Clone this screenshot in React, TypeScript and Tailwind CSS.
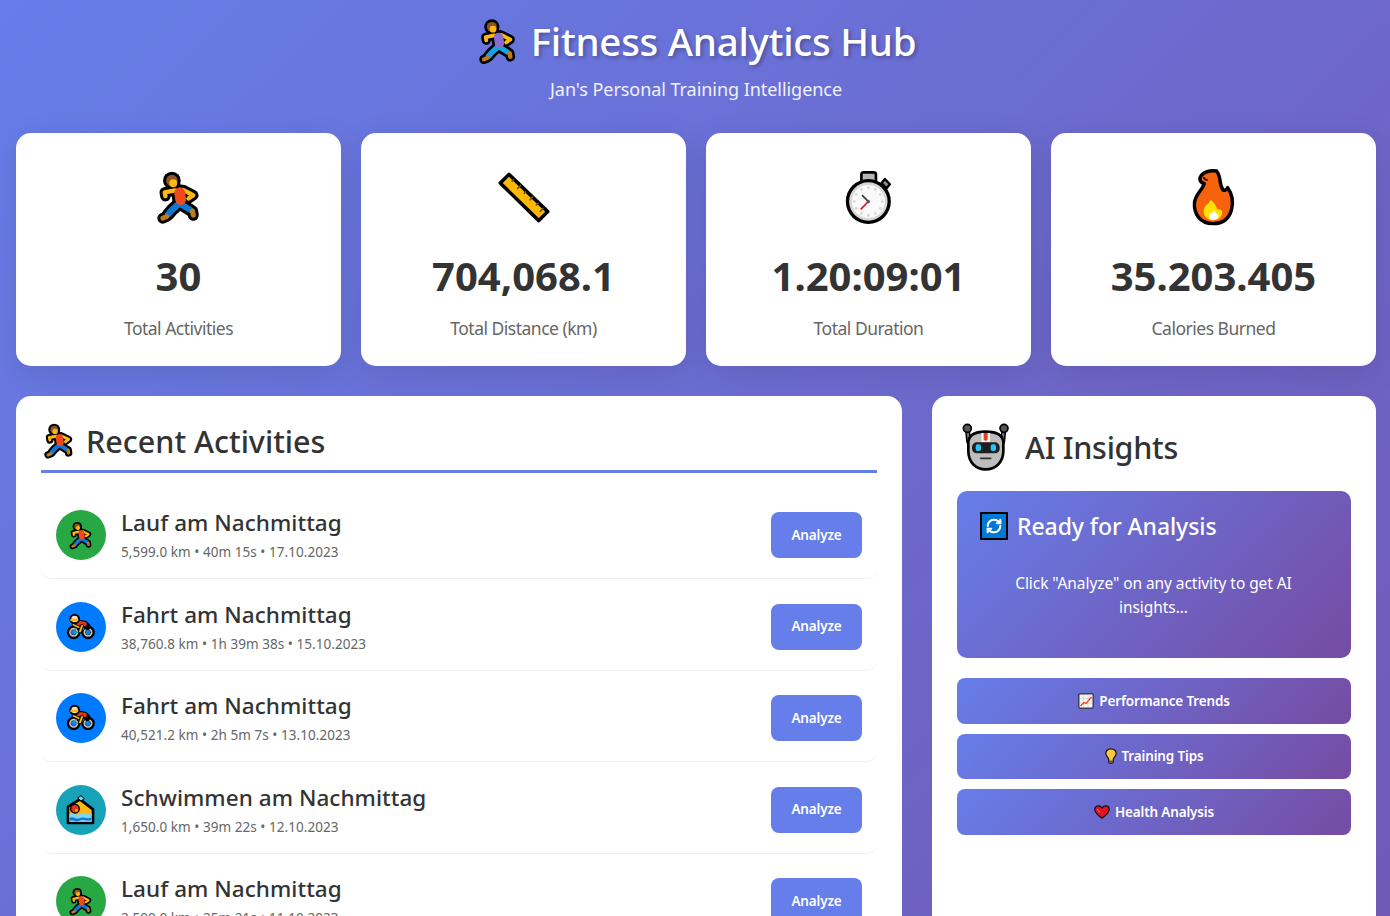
import type { ReactNode } from "react";

type Stroke = { d: string; w: number; c: string };

function Outlined({ shapes, box, className, edge = 18 }: { shapes: Stroke[]; box: string; className: string; edge?: number }) {
  return (
    <svg viewBox={box} className={`${className} overflow-visible`} fill="none" strokeLinecap="round" strokeLinejoin="round">
      {shapes.map((s, i) => (
        <path key={"o" + i} d={s.d} stroke="#000" strokeWidth={s.w + edge} />
      ))}
      {shapes.map((s, i) => (
        <path key={"f" + i} d={s.d} stroke={s.c} strokeWidth={s.w} />
      ))}
    </svg>
  );
}

function Runner({ shirt = "#ee4a1c", pants = "#0a78d4", hair = "#8a5527", foot = "#c07c16", className }: { shirt?: string; pants?: string; hair?: string; foot?: string; className: string }) {
  const skin = "#fdb813";
  return (
    <Outlined
      className={className}
      box="92 40 112 140"
      shapes={[
        { d: "M108 106 L106 95 L136 89", w: 13, c: skin },
        { d: "M160 88 L190 103 L176 113", w: 13, c: skin },
        { d: "M154 130 L180 146", w: 18, c: pants },
        { d: "M188 150 L190 162", w: 15, c: foot },
        { d: "M152 125 L128 146 L116 160", w: 19, c: pants },
        { d: "M112 166 L100 171", w: 14, c: foot },
        { d: "M150 96 L153 116", w: 32, c: shirt },
        { d: "M127 60 L127 60", w: 34, c: hair },
        { d: "M131 68 L131 68", w: 23, c: skin },
      ]}
    />
  );
}

function Ruler() {
  return (
    <svg viewBox="48 32 162 158" className="w-[52px] h-[51px] overflow-visible">
      <path d="M82 39 L55 66 L175 183 L203 155 Z" fill="#ffb900" stroke="#000" strokeWidth="11" strokeLinejoin="round" />
      <path d="M90 62 L98 54 M108 84 L120 72 M128 100 L136 92 M146 120 L158 108 M166 136 L174 128 M178 156 L190 144" stroke="#5c5340" strokeWidth="5" />
    </svg>
  );
}

function Stopwatch() {
  return (
    <svg viewBox="45 30 141 160" className="w-[47px] h-[53px] overflow-visible">
      <path d="M155 66 L165 54 L180 70 L170 82 Z" fill="#8a8a8a" stroke="#000" strokeWidth="7" strokeLinejoin="round" />
      <rect x="94" y="34" width="44" height="30" rx="7" fill="#b5b5b5" stroke="#000" strokeWidth="8" />
      <circle cx="115" cy="122" r="68" fill="#000" />
      <circle cx="115" cy="122" r="58" fill="#d6d6d6" />
      <circle cx="115" cy="122" r="50" fill="#fafafa" />
      {[0, 30, 60, 90, 120, 150, 180, 210, 240, 270, 300, 330].map((a) => (
        <circle key={a} cx={115 + 42 * Math.sin((a * Math.PI) / 180)} cy={122 - 42 * Math.cos((a * Math.PI) / 180)} r="4" fill="#d4d4d4" />
      ))}
      <path d="M115 122 L96 103" stroke="#333" strokeWidth="5" />
      <path d="M115 122 L92 146" stroke="#e81123" strokeWidth="5" />
      <circle cx="115" cy="122" r="5" fill="#555" />
    </svg>
  );
}

function Flame() {
  return (
    <svg viewBox="54 32 118 162" className="w-[41px] h-[56px] overflow-visible">
      <path
        d="M112 190 C72 190 56 160 58 130 C60 105 82 92 86 74 C74 72 70 60 78 50 C88 40 106 36 122 38 C136 54 128 74 140 92 C146 96 150 92 154 86 C170 108 170 130 165 150 C158 176 140 190 112 190 Z"
        fill="#f7630c"
        stroke="#000"
        strokeWidth="10"
        strokeLinejoin="round"
      />
      <path d="M84 56 C88 62 92 66 96 62" stroke="#000" strokeWidth="5" fill="none" />
      <path d="M112 180 C92 180 80 164 86 146 C90 134 100 136 104 122 C118 130 118 140 126 150 C130 146 134 150 138 154 C138 172 128 180 112 180 Z" fill="#ffe100" />
      <path d="M112 180 C102 180 98 168 104 160 C108 164 112 154 116 152 C118 160 124 160 128 166 C126 174 120 180 112 180 Z" fill="#fff" />
    </svg>
  );
}

function Cyclist({ className }: { className: string }) {
  return (
    <svg viewBox="65 78 84 78" className={`${className} overflow-visible`} fill="none" strokeLinecap="round" strokeLinejoin="round">
      <circle cx="85" cy="133" r="17" fill="#c8c8c8" stroke="#000" strokeWidth="7" />
      <circle cx="128" cy="133" r="17" fill="#c8c8c8" stroke="#000" strokeWidth="7" />
      <circle cx="85" cy="133" r="8" fill="#0078ff" stroke="#333" strokeWidth="2" />
      <circle cx="128" cy="133" r="8" fill="#0078ff" stroke="#333" strokeWidth="2" />
      <path d="M85 133 L104 133 L122 114 L96 114 Z M122 114 L128 133" stroke="#12a7b8" strokeWidth="4" />
      <path d="M92 104 L118 108 L126 116" stroke="#000" strokeWidth="20" />
      <path d="M92 104 L118 108" stroke="#e0341c" strokeWidth="13" />
      <path d="M110 114 L104 130" stroke="#000" strokeWidth="12" />
      <path d="M110 114 L104 130" stroke="#fdb813" strokeWidth="6" />
      <path d="M84 110 L100 118" stroke="#000" strokeWidth="10" />
      <path d="M84 110 L100 118" stroke="#fdb813" strokeWidth="5" />
      <circle cx="88" cy="93" r="13" fill="#f5e2c0" stroke="#000" strokeWidth="6" />
      <path d="M78 96 L96 96" stroke="#fdb813" strokeWidth="7" />
    </svg>
  );
}

function Swimmer({ className }: { className: string }) {
  return (
    <svg viewBox="66 66 84 84" className={`${className} overflow-visible`} strokeLinejoin="round">
      <path d="M69 118 L69 98 L105 76 L144 106 L144 147 L69 147 Z" fill="#fdb813" stroke="#000" strokeWidth="8" />
      <path d="M73 120 C84 112 92 128 104 120 C116 112 128 126 140 118 L140 143 L73 143 Z" fill="#7fd3f5" />
      <path d="M73 132 C84 124 92 140 106 132 C118 126 128 138 140 130 L140 137 C128 145 116 133 106 139 C92 147 84 133 73 141 Z" fill="#0a78d4" />
      <circle cx="90" cy="104" r="13" fill="#e0341c" stroke="#000" strokeWidth="4" />
      <path d="M92 104 a7 7 0 0 1 7 7 a10 10 0 0 1 -9 2 Z" fill="#fdb813" />
      <path d="M98 72 L108 65 L118 74 L108 81 Z" fill="#7fd3f5" stroke="#000" strokeWidth="3" />
    </svg>
  );
}

function Robot() {
  return (
    <svg viewBox="36 28 144 144" className="w-[48px] h-[48px] overflow-visible" strokeLinecap="round" strokeLinejoin="round">
      <path d="M52 44 L56 84 M162 44 L158 84" stroke="#000" strokeWidth="15" />
      <path d="M52 44 L56 80 M162 44 L158 80" stroke="#7a7a7a" strokeWidth="6" />
      <circle cx="52" cy="44" r="12" fill="#555" stroke="#000" strokeWidth="5" />
      <circle cx="162" cy="44" r="12" fill="#555" stroke="#000" strokeWidth="5" />
      <path d="M55 88 C55 62 78 54 107 54 C136 54 160 62 160 88 L160 112 C160 148 134 167 107 167 C80 167 55 148 55 112 Z" fill="#bdbdbd" stroke="#000" strokeWidth="8" />
      <path d="M94 58 L120 58 L120 86 L94 86 Z" fill="#f2f2f2" />
      <path d="M101 58 L113 58 L113 78 Q107 84 101 78 Z" fill="#e8401c" />
      <rect x="66" y="86" width="83" height="33" rx="14" fill="#1f1f1f" />
      <rect x="77" y="92" width="16" height="20" rx="6" fill="#27c4f5" />
      <rect x="122" y="92" width="16" height="20" rx="6" fill="#27c4f5" />
      <path d="M92 134 L122 134" stroke="#333" strokeWidth="5" />
    </svg>
  );
}

function RefreshBox() {
  return (
    <svg viewBox="0 0 28 28" className="w-[28px] h-[28px] shrink-0" fill="none" strokeLinecap="round" strokeLinejoin="round">
      <rect x="1" y="1" width="26" height="26" fill="#0078d4" stroke="#000" strokeWidth="2" />
      <g transform="translate(5.6 5.6) scale(0.7)" stroke="#fff" strokeWidth="3">
        <path d="M3 12a9 9 0 0 1 9-9 9.75 9.75 0 0 1 6.74 2.74L21 8" />
        <path d="M21 3v5h-5" />
        <path d="M21 12a9 9 0 0 1-9 9 9.75 9.75 0 0 1-6.74-2.74L3 16" />
        <path d="M8 16H3v5" />
      </g>
    </svg>
  );
}

function ChartIcon() {
  return (
    <svg viewBox="0 0 16 16" className="w-4 h-4 shrink-0">
      <rect x="0.75" y="0.75" width="14.5" height="14.5" rx="1.5" fill="#f4f4f4" stroke="#3f3f55" strokeWidth="1.5" />
      <path d="M5.5 2V14 M10 2V14 M2 5.5H14 M2 10H14" stroke="#d0d0d0" strokeWidth="0.7" />
      <path d="M2.5 13 L6 9.5 L8 10.5 L13.5 4" stroke="#e8401c" strokeWidth="1.2" fill="none" />
    </svg>
  );
}

function BulbIcon() {
  return (
    <svg viewBox="0 0 12 16" className="w-3 h-4 shrink-0">
      <path d="M6 0.8 C2.8 0.8 0.8 3 0.8 5.6 C0.8 8 3.4 9 3.8 11.5 L3.8 14 Q3.8 15.2 5 15.2 L7 15.2 Q8.2 15.2 8.2 14 L8.2 11.5 C8.6 9 11.2 8 11.2 5.6 C11.2 3 9.2 0.8 6 0.8 Z" fill="#ffc83d" stroke="#111" strokeWidth="1.2" />
      <path d="M4 12.5H8V14.4H4Z" fill="#555" />
    </svg>
  );
}

function HeartIcon() {
  return (
    <svg viewBox="0 0 16 14" className="w-4 h-3.5 shrink-0">
      <path d="M8 13.2 C4 10.2 0.8 7.6 0.8 4.4 C0.8 2.2 2.5 0.8 4.4 0.8 C6 0.8 7.2 1.6 8 2.8 C8.8 1.6 10 0.8 11.6 0.8 C13.5 0.8 15.2 2.2 15.2 4.4 C15.2 7.6 12 10.2 8 13.2 Z" fill="#e81123" stroke="#111" strokeWidth="1.2" />
      <path d="M3 4 L6 7.5" stroke="#f58a8f" strokeWidth="0.8" />
    </svg>
  );
}

function StatCard({ icon, value, label }: { icon: ReactNode; value: string; label: string }) {
  return (
    <div className="bg-white rounded-[15px] h-[233px] flex flex-col items-center shadow-[0_8px_32px_rgba(0,0,0,0.1)]">
      <div className="h-[56px] mt-[36px] flex items-center justify-center">{icon}</div>
      <div className="mt-[25px] text-[40px] leading-[52px] font-bold text-[#333]">{value}</div>
      <div className="mt-[14px] text-[17.5px] leading-[24px] text-[#666] tracking-[-0.5px]">{label}</div>
    </div>
  );
}

const activities = [
  { title: "Lauf am Nachmittag", meta: "5,599.0 km • 40m 15s • 17.10.2023", kind: "run" },
  { title: "Fahrt am Nachmittag", meta: "38,760.8 km • 1h 39m 38s • 15.10.2023", kind: "bike" },
  { title: "Fahrt am Nachmittag", meta: "40,521.2 km • 2h 5m 7s • 13.10.2023", kind: "bike" },
  { title: "Schwimmen am Nachmittag", meta: "1,650.0 km • 39m 22s • 12.10.2023", kind: "swim" },
  { title: "Lauf am Nachmittag", meta: "2,500.0 km • 25m 21s • 11.10.2023", kind: "run" },
];

function ActivityRow({ title, meta, kind }: { title: string; meta: string; kind: string }) {
  return (
    <div className="h-[87px] mb-[4.5px] flex items-center justify-between px-[15px] border-b border-[#f0f0f0] rounded-[10px]">
      <div className="flex items-center gap-[15px]">
        {kind === "run" && (
          <div className="w-[50px] h-[50px] rounded-full bg-[#28a745] flex items-center justify-center">
            <Runner className="w-[20px] h-[25px]" />
          </div>
        )}
        {kind === "bike" && (
          <div className="w-[50px] h-[50px] rounded-full bg-[#007bff] flex items-center justify-center">
            <Cyclist className="w-[28px] h-[26px]" />
          </div>
        )}
        {kind === "swim" && (
          <div className="w-[50px] h-[50px] rounded-full bg-[#17a2b8] flex items-center justify-center">
            <Swimmer className="w-[28px] h-[28px]" />
          </div>
        )}
        <div>
          <div className="text-[22.5px] leading-[30px] font-medium text-[#333] tracking-[0.05px]">{title}</div>
          <div className="mt-[4px] text-[13.5px] leading-[20px] text-[#666] tracking-[0.05px]">{meta}</div>
        </div>
      </div>
      <button className="w-[91px] h-[46px] rounded-[8px] bg-[#667eea] text-white text-[13.5px] font-semibold tracking-[-0.15px]">Analyze</button>
    </div>
  );
}

function ActionButton({ icon, label }: { icon: ReactNode; label: string }) {
  return (
    <button className="h-[45.5px] w-full rounded-[8px] bg-[linear-gradient(135deg,#667eea,#764ba2)] text-white text-[13.5px] font-semibold tracking-[-0.15px] flex items-center justify-center gap-[5px]">
      {icon}
      {label}
    </button>
  );
}

export default function App() {
  return (
    <div className="h-[916px] overflow-hidden font-['Noto_Sans',sans-serif]">
      <div className="h-[1800px] pl-4 pr-[14px] bg-[linear-gradient(135deg,#667eea_0%,#764ba2_100%)]">
        <header className="h-[133px] flex flex-col items-center">
          <div className="mt-[15px] ml-[5px] h-[52px] flex items-center gap-[16px]">
            <Runner shirt="#8a6bd0" pants="#1ba1e2" hair="#8a5527" foot="#c07c16" className="w-[34px] h-[41px]" />
            <h1 className="text-[38.5px] leading-[52px] font-medium text-white tracking-[-0.25px] [text-shadow:2px_2px_4px_rgba(0,0,0,0.3)]">Fitness Analytics Hub</h1>
          </div>
          <p className="mt-[9px] text-[18px] leading-[26px] text-white/90 tracking-[-0.05px]">Jan's Personal Training Intelligence</p>
        </header>

        <section className="grid grid-cols-4 gap-5">
          <StatCard icon={<Runner className="w-[38px] h-[49px]" />} value="30" label="Total Activities" />
          <StatCard icon={<Ruler />} value="704,068.1" label="Total Distance (km)" />
          <StatCard icon={<Stopwatch />} value="1.20:09:01" label="Total Duration" />
          <StatCard icon={<Flame />} value="35.203.405" label="Calories Burned" />
        </section>

        <section className="mt-[30px] grid grid-cols-[886px_444px] gap-[30px]">
          <div className="bg-white rounded-[15px] h-[1000px] px-[25px] pt-[25px]">
            <div className="h-[52px] border-b-[3px] border-[#667eea] flex items-start gap-[13px] pl-[4px]">
              <Runner className="w-[28px] h-[32px] mt-[4px]" />
              <h2 className="text-[30.5px] leading-[40px] font-medium text-[#333]">Recent Activities</h2>
            </div>
            <div className="mt-[19px]">
              {activities.map((a, i) => (
                <ActivityRow key={i} {...a} />
              ))}
            </div>
          </div>

          <div className="bg-white rounded-[15px] h-[1000px] px-[25px] pt-[27px]">
            <div className="flex items-center gap-[15px] pl-[5px] h-[48px]">
              <Robot />
              <h2 className="text-[30.5px] leading-[40px] font-medium text-[#333] tracking-[-0.3px]">AI Insights</h2>
            </div>
            <div className="mt-[20px] h-[167px] rounded-[10px] bg-[linear-gradient(135deg,#667eea,#764ba2)] text-white pl-[23px] pr-[24px] pt-[21px]">
              <div className="flex items-center gap-[9px]">
                <RefreshBox />
                <h3 className="text-[23px] leading-[28px] font-medium tracking-[-0.07px]">Ready for Analysis</h3>
              </div>
              <p className="mt-[31px] text-center text-[15.5px] leading-[24px] tracking-[-0.07px] px-[20px]">Click "Analyze" on any activity to get AI insights...</p>
            </div>
            <div className="mt-[20px] flex flex-col gap-[10px]">
              <ActionButton icon={<ChartIcon />} label="Performance Trends" />
              <ActionButton icon={<BulbIcon />} label="Training Tips" />
              <ActionButton icon={<HeartIcon />} label="Health Analysis" />
            </div>
          </div>
        </section>
      </div>
    </div>
  );
}
